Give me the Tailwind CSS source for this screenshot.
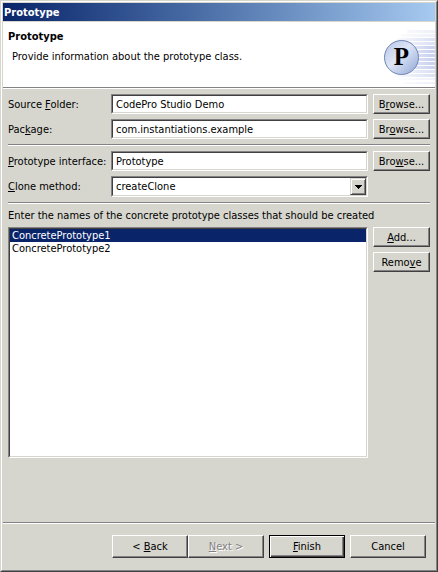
<!DOCTYPE html>
<html lang="en">
<head>
<meta charset="utf-8">
<title>Prototype</title>
<meta name="viewport" content="width=device-width, initial-scale=1">
<script src="https://cdn.jsdelivr.net/npm/@tailwindcss/browser@4"></script>
</head>
<body class="bg-[#d6d6ce] font-['DejaVu_Sans_Condensed','DejaVu_Sans',sans-serif] text-[11px] leading-[13px] text-black">
<main class="flex min-h-screen flex-col border border-t-[#d6d6ce] border-r-[#404040] border-b-[#404040] border-l-[#d6d6ce]">
<div class="flex grow flex-col border border-t-white border-r-[#848284] border-b-[#848284] border-l-white p-px">
  <div class="mb-px flex h-[18px] items-center bg-linear-to-r from-[#0a246a] to-[#a6caf0] px-px font-bold text-white">Prototype</div>
  <header class="flex h-[65px] items-start justify-between bg-white">
    <div class="pt-2 pl-[5px]">
      <h1 class="font-bold">Prototype</h1>
      <p class="pt-1.5 pl-1 leading-4">Provide information about the prototype class.</p>
    </div>
    <svg class="h-[65px] w-[62px]" viewBox="0 0 62 65" aria-hidden="true">
      <defs>
        <linearGradient id="fade" gradientUnits="userSpaceOnUse" x1="0" y1="0" x2="62" y2="0"><stop offset=".25" stop-color="#c9d2ee" stop-opacity="0"/><stop offset=".95" stop-color="#c9d2ee"/></linearGradient>
        <linearGradient id="disc" x1="0" y1="0" x2="1" y2="1"><stop offset="0" stop-color="#b4c3e6"/><stop offset=".45" stop-color="#dfe6f6"/><stop offset="1" stop-color="#8fa6d6"/></linearGradient>
      </defs>
      <g fill="url(#fade)">
        <path opacity=".3" d="M34 8h28v3H34zM28 12h34v3H28zM24 56h38v2H24zM30 60h32v2H30z"/>
        <path opacity=".65" d="M24 16h38v3H24zM20 20h42v3H20zM20 48h42v3H20zM22 52h40v3H22z"/>
        <path d="M16 24h46v3H16zM16 28h46v3H16zM16 32h46v3H16zM16 36h46v3H16zM16 40h46v3H16zM16 44h46v3H16z"/>
      </g>
      <circle cx="28.5" cy="35.5" r="17" fill="url(#disc)" stroke="#6f86b4"/>
      <text x="28.5" y="43" text-anchor="middle" font-family="Liberation Serif, serif" font-weight="bold" font-size="25">P</text>
    </svg>
  </header>
  <hr class="h-0.5 border-t border-b border-t-[#848284] border-b-white">

  <form class="flex grow flex-col">
    <div class="flex grow flex-col px-[5px] pt-[5px]">
      <div class="grid grid-cols-[103px_1fr_57px] items-center gap-y-[5px]">
        <label for="src">Source <u>F</u>older:</label>
        <span class="mr-[5px] flex border border-t-[#848284] border-r-white border-b-white border-l-[#848284]"><input id="src" value="CodePro Studio Demo" class="h-[18px] w-full min-w-0 border border-t-[#404040] border-r-[#d6d6ce] border-b-[#d6d6ce] border-l-[#404040] bg-white px-[3px] outline-none"></span>
        <button type="button" class="flex h-5 items-center justify-center border border-t-white border-r-[#404040] border-b-[#404040] border-l-white bg-[#d6d6ce] shadow-[inset_-1px_-1px_#848284]"><span>B<u>r</u>owse...</span></button>
        <label for="pkg">Pac<u>k</u>age:</label>
        <span class="mr-[5px] flex border border-t-[#848284] border-r-white border-b-white border-l-[#848284]"><input id="pkg" value="com.instantiations.example" class="h-[18px] w-full min-w-0 border border-t-[#404040] border-r-[#d6d6ce] border-b-[#d6d6ce] border-l-[#404040] bg-white px-[3px] outline-none"></span>
        <button type="button" class="flex h-5 items-center justify-center border border-t-white border-r-[#404040] border-b-[#404040] border-l-white bg-[#d6d6ce] shadow-[inset_-1px_-1px_#848284]"><span>Br<u>o</u>wse...</span></button>
        <hr class="col-span-3 h-0.5 border-t border-b border-t-[#848284] border-b-white">
        <label for="iface"><u>P</u>rototype interface:</label>
        <span class="mr-[5px] flex border border-t-[#848284] border-r-white border-b-white border-l-[#848284]"><input id="iface" value="Prototype" class="h-[18px] w-full min-w-0 border border-t-[#404040] border-r-[#d6d6ce] border-b-[#d6d6ce] border-l-[#404040] bg-white px-[3px] outline-none"></span>
        <button type="button" class="flex h-5 items-center justify-center border border-t-white border-r-[#404040] border-b-[#404040] border-l-white bg-[#d6d6ce] shadow-[inset_-1px_-1px_#848284]"><span>Bro<u>w</u>se...</span></button>
        <label for="clone"><u>C</u>lone method:</label>
        <span class="relative mr-[5px] flex border border-t-[#848284] border-r-white border-b-white border-l-[#848284]">
          <select id="clone" class="h-[19px] w-full min-w-0 appearance-none border border-t-[#404040] border-r-[#d6d6ce] border-b-[#d6d6ce] border-l-[#404040] bg-white px-[3px] outline-none"><option>createClone</option></select>
          <span class="pointer-events-none absolute inset-y-px right-px flex w-4 items-center justify-center border border-t-[#d6d6ce] border-r-[#404040] border-b-[#404040] border-l-[#d6d6ce] bg-[#d6d6ce] shadow-[inset_1px_1px_#fff,inset_-1px_-1px_#848284]"><svg class="h-1 w-[7px]" viewBox="0 0 7 4" shape-rendering="crispEdges" aria-hidden="true"><path d="M0 0h7v1H6v1H5v1H4v1H3V3H2V2H1V1H0z"/></svg></span>
        </span>
        <hr class="col-span-3 h-0.5 border-t border-b border-t-[#848284] border-b-white">
      </div>
      <label for="names" class="py-[5px]">Enter the names of the concrete prototype classes that should be created</label>
      <div class="flex grow gap-[5px] pb-16">
        <span class="flex min-w-0 grow border border-t-[#848284] border-r-white border-b-white border-l-[#848284]"><select id="names" size="2" class="w-full border border-t-[#404040] border-r-[#d6d6ce] border-b-[#d6d6ce] border-l-[#404040] bg-white outline-none"><option class="min-h-0 bg-[#0a246a] px-0.5 py-0 text-white">ConcretePrototype1</option><option class="min-h-0 px-0.5 py-0">ConcretePrototype2</option></select></span>
        <div class="flex w-[57px] shrink-0 flex-col gap-[5px]">
          <button type="button" class="flex h-5 items-center justify-center border border-t-white border-r-[#404040] border-b-[#404040] border-l-white bg-[#d6d6ce] shadow-[inset_-1px_-1px_#848284]"><span><u>A</u>dd...</span></button>
          <button type="button" class="flex h-5 items-center justify-center border border-t-white border-r-[#404040] border-b-[#404040] border-l-white bg-[#d6d6ce] shadow-[inset_-1px_-1px_#848284]"><span>Remo<u>v</u>e</span></button>
        </div>
      </div>
    </div>
    <hr class="h-0.5 border-t border-b border-t-[#848284] border-b-white">
    <footer class="flex justify-end gap-[5px] pt-[11px] pr-[9px] pb-[11px]">
      <div class="flex">
        <button type="button" class="flex h-[23px] w-[76px] items-center justify-center border border-t-white border-r-[#404040] border-b-[#404040] border-l-white bg-[#d6d6ce] shadow-[inset_-1px_-1px_#848284]"><span>&lt; <u>B</u>ack</span></button>
        <button type="button" disabled class="flex h-[23px] w-[76px] items-center justify-center border border-t-white border-r-[#404040] border-b-[#404040] border-l-white bg-[#d6d6ce] text-[#848284] shadow-[inset_-1px_-1px_#848284] text-shadow-[1px_1px_#fff]"><span><u>N</u>ext &gt;</span></button>
      </div>
      <button type="submit" class="flex h-[23px] w-[76px] items-center justify-center border border-black bg-[#d6d6ce] shadow-[inset_1px_1px_#fff,inset_-1px_-1px_#404040,inset_-2px_-2px_#848284]"><span><u>F</u>inish</span></button>
      <button type="button" class="flex h-[23px] w-[76px] items-center justify-center border border-t-white border-r-[#404040] border-b-[#404040] border-l-white bg-[#d6d6ce] shadow-[inset_-1px_-1px_#848284]"><span>Cancel</span></button>
    </footer>
  </form>
</div>
</main>
</body>
</html>
